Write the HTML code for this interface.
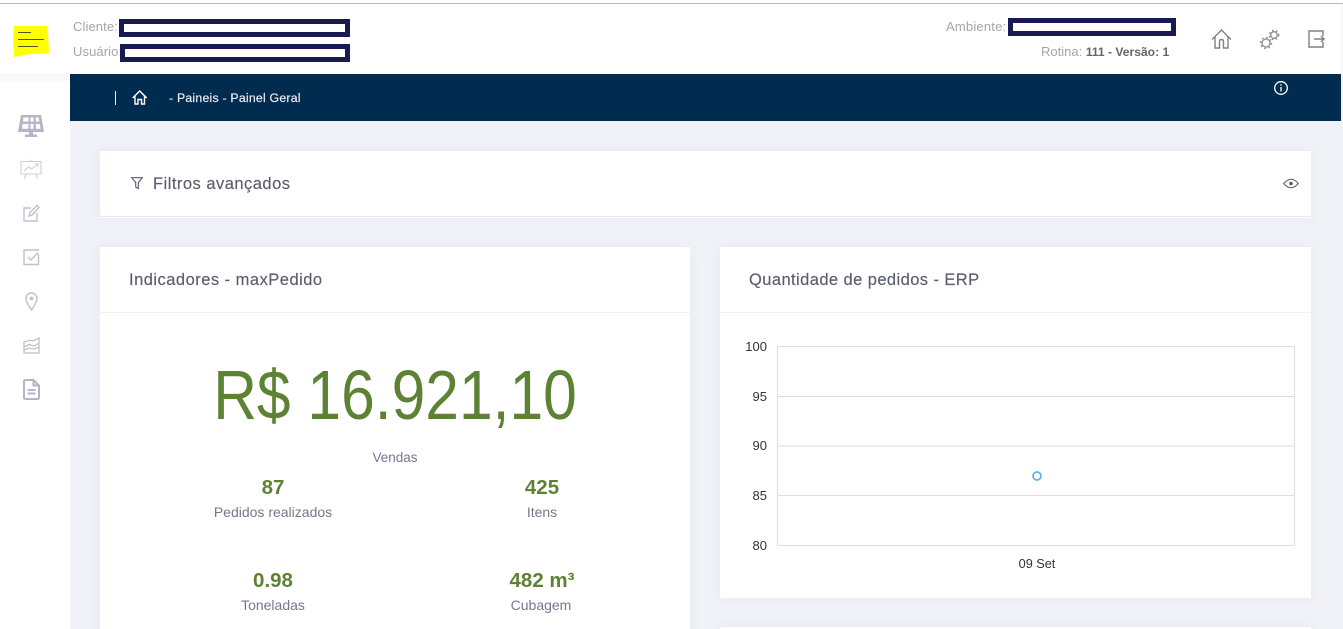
<!DOCTYPE html>
<html lang="pt-BR"><head><meta charset="utf-8"><title>Painel Geral</title>
<style>
html,body{margin:0;padding:0;width:1343px;height:629px;overflow:hidden;background:#f0f1f7;font-family:"Liberation Sans",sans-serif}
#w{position:relative;width:1343px;height:629px;overflow:hidden;background:#f1f2f8}
.a{position:absolute;white-space:nowrap}
.c{position:absolute;background:#fff;box-shadow:0 0 12px rgba(80,80,120,.055)}
.t{color:#595d6e;font-size:16.5px;line-height:20px;letter-spacing:.48px;-webkit-text-stroke:.15px #595d6e}
.g{color:#5d8234;font-weight:bold;font-size:20.5px;line-height:24px;text-align:center;width:200px}
.l{color:#74788d;font-size:14px;line-height:18px;text-align:center;width:200px}
.y{color:#333;font-size:13px;line-height:16px;text-align:right;width:30px;left:737px}
.h{color:#a5a5a5;font-size:13px;line-height:16px;letter-spacing:.1px}
.r{position:absolute;border:5px solid #171b52;background:#fff;box-sizing:border-box}
svg{position:absolute;overflow:visible}
</style></head><body><div id="w">
<div class="a" style="left:0;top:0;width:1343px;height:74px;background:#fff"></div>
<div class="a" style="left:0;top:3px;width:1343px;height:1px;background:#b9b9b9"></div>
<div class="a" style="left:70px;top:74px;width:1271px;height:47px;background:#012b4f"></div>
<div class="a" style="left:0;top:74px;width:70px;height:555px;background:linear-gradient(#f4f4f4,#fff 10px,#fff)"></div>
<div class="a" style="left:1341px;top:4px;width:2px;height:70px;background:#f7f7f7"></div>

<svg style="left:0;top:0" width="70" height="74"><polygon points="14,26 47,26 48,33 49,53 30,54 14,57 13,40" fill="#ffff00"/><path d="M18 32.5H31M18 39.5H44M18 46.5H38" stroke="#4a5a10" stroke-width="1"/></svg>

<div class="a h" style="left:73px;top:19px">Cliente:</div>
<div class="r" style="left:119px;top:19px;width:231px;height:18px"></div>
<div class="a h" style="left:73px;top:44px">Usuário:</div>
<div class="r" style="left:120px;top:44px;width:230px;height:18px"></div>
<div class="a h" style="left:946px;top:19px;letter-spacing:.2px">Ambiente:</div>
<div class="r" style="left:1008px;top:18px;width:168px;height:18px"></div>
<div class="a h" style="left:1041px;top:44px;letter-spacing:0">Rotina: <b style="color:#666;font-size:12.1px">111 - Versão: 1</b></div>

<svg style="left:1211px;top:29px" width="22" height="20" fill="none" stroke="#808080" stroke-width="1.4"><path d="M1 10.5 10.5 1 20 10.5M4 8V19H8.5V12.5Q8.5 10.5 10.5 10.5T12.500 12.5V19H17V8"/></svg>
<svg style="left:1259px;top:29px" width="22" height="20" fill="none" stroke="#8a8a8a" stroke-width="1.3"><circle cx="7" cy="14" r="4"/><circle cx="15" cy="6" r="3.3"/><circle cx="7" cy="14" r="5.500" stroke-dasharray="1.700 2.600"/><circle cx="15" cy="6" r="4.700" stroke-dasharray="1.600 2.400"/></svg>
<svg style="left:1308px;top:30px" width="18" height="18" fill="none" stroke="#808080" stroke-width="1.4"><path d="M15 6V1H1V17H15V12M6 9H16M13 6 16 9 13 12"/></svg>

<div class="a" style="left:115px;top:91px;width:1px;height:14px;background:#e8edf2"></div>
<svg style="left:132px;top:90px" width="16" height="15" fill="none" stroke="#fff" stroke-width="1.4"><path d="M.7 8 7.7 1 14.700 8M3 6V14H6V9.500H9.500V14H12.500V6"/></svg>
<div class="a" style="left:169px;top:90px;color:#e9edf2;font-size:12.300px;line-height:16px;letter-spacing:.22px;-webkit-text-stroke:.2px #e9edf2">- Paineis - Painel Geral</div>
<svg style="left:1274px;top:81px" width="15" height="15" fill="none" stroke="#fff" stroke-width="1.300"><circle cx="7" cy="7" r="6.300"/><path d="M7 6V10.500M7 3.300V4.800"/></svg>

<svg style="left:18px;top:114px" width="28" height="24" fill="#b5b5c8"><path d="M3 1H23L26 18H0ZM5.500 3.500 5 7.500H10.500L10.800 3.500ZM12.500 3.500V7.500H15.500V3.500ZM17.500 3.500 17.800 7.500H21.500L20.800 3.500ZM4.700 10 4 14.800H10.300L10.500 10ZM12.500 10V14.800H15.500V10ZM17.800 10 18 14.800H22.500L21.900 10Z" fill-rule="evenodd"/><path d="M11 18H15V20.500H19V23H7V20.500H11Z"/></svg>
<svg style="left:20px;top:159px" width="22" height="21" fill="none" stroke="#cfcfdc" stroke-width="1.100"><path d="M1 2.500H21V15H1ZM11 .5V2.500M6 15 4.500 20M16 15 17.500 20M4 12 8.500 8 11.500 10 18 5M15 5H18V8"/></svg>
<svg style="left:23px;top:204px" width="17" height="18" fill="none" stroke="#c0c0d1" stroke-width="1.400"><path d="M8 4H1V17H14V9"/><path d="M6 12 7 8.500 14 1.500 16 3.500 9 11Z"/></svg>
<svg style="left:23px;top:249px" width="17" height="17" fill="none" stroke="#c0c0d1" stroke-width="1.400"><path d="M16 1H1V15.500H15.500V5M5 8 8 11 15 3.500"/></svg>
<svg style="left:25px;top:292px" width="13" height="19" fill="none" stroke="#c0c0d1" stroke-width="1.400"><path d="M6.500 18C4 14 1 10.500 1 6.500A5.500 5.500 0 0 1 12 6.500C12 10.500 9 14 6.500 18Z"/><circle cx="6.500" cy="6.500" r="1.200" fill="#c0c0d1"/></svg>
<svg style="left:23px;top:337px" width="17" height="17" fill="none" stroke="#c0c0d1" stroke-width="1.300"><path d="M1 5V16H16V1L11 3.500 6 3.500 1 5ZM1 10 6 7.500 11 9 16 6M1 13 6 11 11 12 16 10"/></svg>
<svg style="left:23px;top:379px" width="17" height="21" fill="none" stroke="#b5b5c8" stroke-width="2"><path d="M2.500 1H10.500L16 6.500V18.500Q16 20 14.500 20H2.500Q1 20 1 18.500V2.500Q1 1 2.500 1ZM10.500 1V6.500H16"/><path d="M4.500 11H12.500M4.500 14.500H12.500"/></svg>

<div class="c" style="left:100px;top:151px;width:1211px;height:67px"></div>
<div class="a" style="left:100px;top:216px;width:1211px;height:1px;background:#e9eaf0"></div>
<svg style="left:131px;top:177px" width="12" height="13" fill="none" stroke="#595d6e" stroke-width="1.100"><path d="M.7.700H11.300L7.300 5.500V11.500L4.700 10V5.500Z"/></svg>
<div class="a t" style="left:153px;top:174px">Filtros avançados</div>
<svg style="left:1283px;top:178px" width="16" height="11" fill="none" stroke="#55586a" stroke-width="1"><path d="M.7 5.500Q8-3 15.300 5.500 8 14 .7 5.500Z"/><circle cx="8" cy="5.500" r="1.800" fill="#55586a" stroke="none"/></svg>

<div class="c" style="left:100px;top:247px;width:590px;height:400px"></div>
<div class="a" style="left:100px;top:312px;width:590px;height:1px;background:#f0f1f4"></div>
<div class="a t" style="left:129px;top:270px">Indicadores - maxPedido</div>
<div class="a" style="left:95px;top:353px;width:600px;text-align:center;color:#5d8234;font-size:70px;line-height:84px;transform:scaleX(.865)">R$ 16.921,10</div>
<div class="a l" style="left:295px;top:449px;font-size:13.500px">Vendas</div>
<div class="a g" style="left:173px;top:476px">87</div>
<div class="a l" style="left:173px;top:503px">Pedidos realizados</div>
<div class="a g" style="left:442px;top:476px">425</div>
<div class="a l" style="left:442px;top:503px">Itens</div>
<div class="a g" style="left:173px;top:569px">0.98</div>
<div class="a l" style="left:173px;top:596px">Toneladas</div>
<div class="a g" style="left:442px;top:569px">482 m³</div>
<div class="a l" style="left:441px;top:596px">Cubagem</div>

<div class="c" style="left:720px;top:247px;width:591px;height:351px"></div>
<div class="a" style="left:720px;top:312px;width:591px;height:1px;background:#f0f1f4"></div>
<div class="a t" style="left:749px;top:270px;letter-spacing:.42px">Quantidade de pedidos - ERP</div>
<svg style="left:0;top:0" width="1343" height="629" fill="none"><path d="M777.500 346.500H1294.500V545.500H777.500ZM777 396.500H1295M777 446H1295M777 495.500H1295" stroke="#dedede"/><circle cx="1037" cy="476" r="4" stroke="#63b5e3" stroke-width="1.800" fill="#fff"/></svg>
<div class="a y" style="top:339px">100</div>
<div class="a y" style="top:389px">95</div>
<div class="a y" style="top:438px">90</div>
<div class="a y" style="top:488px">85</div>
<div class="a y" style="top:538px">80</div>
<div class="a" style="left:987px;top:556px;width:100px;text-align:center;color:#333;font-size:12.700px;line-height:16px">09 Set</div>
<div class="c" style="left:720px;top:627px;width:591px;height:20px"></div>
</div></body></html>
